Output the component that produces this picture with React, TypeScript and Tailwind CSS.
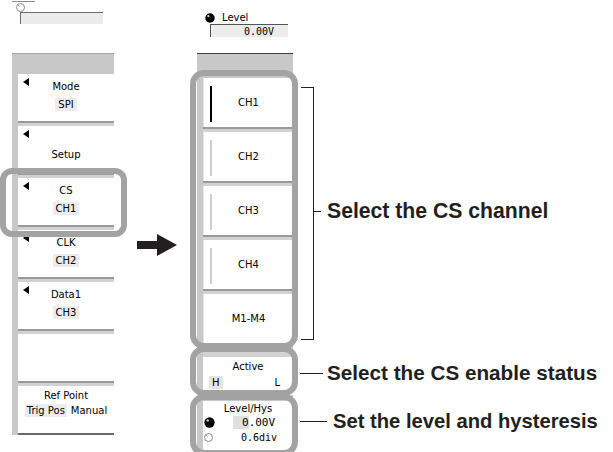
import React from "react";

const Tri = () => (
    <span className="absolute left-[5px] top-[4px] h-0 w-0 border-y-[4px] border-r-[6px] border-y-transparent border-r-black" />
);

const Sep = () => <div className="h-[5px] border-t-2 border-[#9a9a9a] bg-[#d2d2d2]" />;

const KnobOpen = () => (
    <svg width="9" height="9" viewBox="0 0 9 9" className="block">
        <circle cx="4.5" cy="4.5" r="4" fill="white" stroke="#8a8a8a" strokeWidth="1" />
        <line x1="2.2" y1="2.2" x2="3.6" y2="3.6" stroke="#8a8a8a" strokeWidth="1" />
    </svg>
);

const KnobFilled = ({ size = 10 }: { size?: number }) => (
    <svg width={size} height={size} viewBox="0 0 10 10" className="block">
        <circle cx="5" cy="5" r="4.7" fill="#000" />
        <circle cx="3.4" cy="3.2" r="1.1" fill="#fff" opacity="0.8" />
    </svg>
);

type CellProps = { label?: string; value?: string; tri?: boolean; low?: boolean };

const LeftCell = ({ label, value, tri = true, low = false }: CellProps) => (
    <>
        <div className={"relative flex h-[47px] flex-col items-center bg-white " + (low ? "pt-[22px]" : "pt-[6px]")}>
            {tri ? <Tri /> : null}
            {label ? <div className="leading-[13px]">{label}</div> : null}
            {value ? <div className="mt-[5px] bg-[#ececec] px-[3px] leading-[13px]">{value}</div> : null}
        </div>
        <Sep />
    </>
);

const ChCell = ({ label, active = false }: { label: string; active?: boolean }) => (
    <>
        <div className="relative flex h-[49px] items-center justify-center border-l border-[#e6e6e6] bg-white">
            <span className={"absolute left-[6px] top-[8px] h-[36px] w-[2px] " + (active ? "bg-black" : "bg-[#cfcfcf]")} />
            <span className="leading-[13px]">{label}</span>
        </div>
        <Sep />
    </>
);

const App = () => {
    return (
        <div className="relative flex h-[452px] w-[613px] items-start overflow-hidden bg-white font-['DejaVu_Sans',sans-serif] text-[10px] text-black">
            {/* left menu */}
            <div className="ml-[12px] flex w-[102px] flex-col">
                <div className="h-[53px]">
                    <div className="mt-[1px] h-px w-[23px] bg-[#8a8a8a]" />
                    <div className="ml-[4px] mt-[1px]">
                        <KnobOpen />
                    </div>
                    <div className="ml-[8px] h-[12px] w-[83px] border-l border-t border-[#6a6a6a] bg-[#ececec]" />
                </div>
                <div className="h-[21px] border-t border-[#a8a8a8] bg-[#c8c8c8]" />
                <div className="bg-[#c8c8c8] pl-[6px]">
                    <LeftCell label="Mode" value="SPI" />
                    <LeftCell label="Setup" low />
                    <LeftCell label="CS" value="CH1" />
                    <LeftCell label="CLK" value="CH2" />
                    <LeftCell label="Data1" value="CH3" />
                    <LeftCell tri={false} />
                    <div className="flex h-[47px] flex-col items-center bg-white pt-[3px]">
                        <div className="leading-[13px]">Ref Point</div>
                        <div className="mt-[2px] flex gap-[4px] leading-[13px]">
                            <span className="bg-[#ececec] px-[2px]">Trig Pos</span>
                            <span>Manual</span>
                        </div>
                    </div>
                    <div className="h-[2px] bg-[#6a6a6a]" />
                </div>
            </div>

            {/* arrow */}
            <div className="w-[83px] pl-[23px] pt-[234px]">
                <svg width="40" height="22" viewBox="0 0 40 22" className="block">
                    <polygon points="0,7 20,7 20,0 40,11 20,22 20,15 0,15" fill="#231f20" />
                </svg>
            </div>

            {/* right menu */}
            <div className="flex w-[96px] flex-col">
                <div className="h-[53px]">
                    <div className="flex items-end pl-[8px] pt-[12px]">
                        <KnobFilled />
                        <span className="ml-[7px] leading-[11px]">Level</span>
                    </div>
                    <div className="ml-[13px] mt-[1px] flex h-[13px] w-[78px] items-center justify-end border-l border-t border-[#555] bg-[#ececec] pr-[14px] font-['DejaVu_Sans_Mono',monospace] leading-[11px]">
                        0.00V
                    </div>
                </div>
                <div className="h-[20px] border-t border-[#3c3c3c] bg-[#c8c8c8]" />
                <div className="bg-[#c8c8c8] pl-[6px] pt-[5px]">
                    <ChCell label="CH1" active />
                    <ChCell label="CH2" />
                    <ChCell label="CH3" />
                    <ChCell label="CH4" />
                    <div className="flex h-[49px] items-center justify-center border-l border-[#e6e6e6] bg-white">M1-M4</div>
                    <div className="h-[9px]" />
                    <div className="flex h-[43px] flex-col border-t-[5px] border-[#d2d2d2] bg-white pt-[3px]">
                        <div className="text-center leading-[13px]">Active</div>
                        <div className="mt-[3px] flex justify-between pl-[6px] pr-[13px] leading-[13px]">
                            <span className="bg-[#e4e4e4] px-[3px]">H</span>
                            <span>L</span>
                        </div>
                    </div>
                    <div className="h-[6px]" />
                    <div className="flex h-[52px] flex-col bg-white pt-[1px]">
                        <div className="text-center leading-[13px]">Level/Hys</div>
                        <div className="mt-[1px] flex items-center leading-[13px]">
                            <span className="ml-[1px]">
                                <KnobFilled size={11} />
                            </span>
                            <span className="ml-[18px] font-['DejaVu_Sans_Mono',monospace] text-[11px]">
                                <span className="bg-[#e0e0e0] pl-[9px]">0</span>.00V
                            </span>
                        </div>
                        <div className="mt-[2px] flex items-center leading-[13px]">
                            <span className="ml-[1px]">
                                <KnobOpen />
                            </span>
                            <span className="ml-[28px] font-['DejaVu_Sans_Mono',monospace]">0.6div</span>
                        </div>
                    </div>
                </div>
            </div>

            {/* highlight frames */}
            <div className="absolute left-[0px] top-[168px] h-[69px] w-[127px] rounded-[12px] border-[6px] border-[#a3a3a3]" />
            <div className="absolute left-[190px] top-[70px] h-[279px] w-[108px] rounded-[14px] border-[6px] border-[#a3a3a3]" />
            <div className="absolute left-[190px] top-[346px] h-[50px] w-[108px] rounded-[14px] border-[6px] border-[#a3a3a3]" />
            <div className="absolute left-[190px] top-[394px] h-[62px] w-[108px] rounded-[14px] border-[6px] border-[#a3a3a3]" />

            {/* callouts */}
            <div className="absolute left-[301px] top-[87px] h-[253px] w-[13px] border-y border-r border-[#231f20]" />
            <div className="absolute left-[313px] top-[211px] h-px w-[8px] bg-[#231f20]" />
            <div className="absolute left-[300px] top-[373px] h-px w-[23px] bg-[#231f20]" />
            <div className="absolute left-[300px] top-[421px] h-px w-[27px] bg-[#231f20]" />

            <div className="absolute left-[327px] top-[199px] font-['Liberation_Sans',Arial,sans-serif] text-[21.2px] font-bold leading-[24px] text-[#231f20]">
                Select the CS channel
            </div>
            <div className="absolute left-[327px] top-[361px] font-['Liberation_Sans',Arial,sans-serif] text-[20.7px] font-bold leading-[24px] text-[#231f20]">
                Select the CS enable status
            </div>
            <div className="absolute left-[333px] top-[409px] font-['Liberation_Sans',Arial,sans-serif] text-[20.2px] font-bold leading-[24px] text-[#231f20]">
                Set the level and hysteresis
            </div>
        </div>
    );
};

export default App;
